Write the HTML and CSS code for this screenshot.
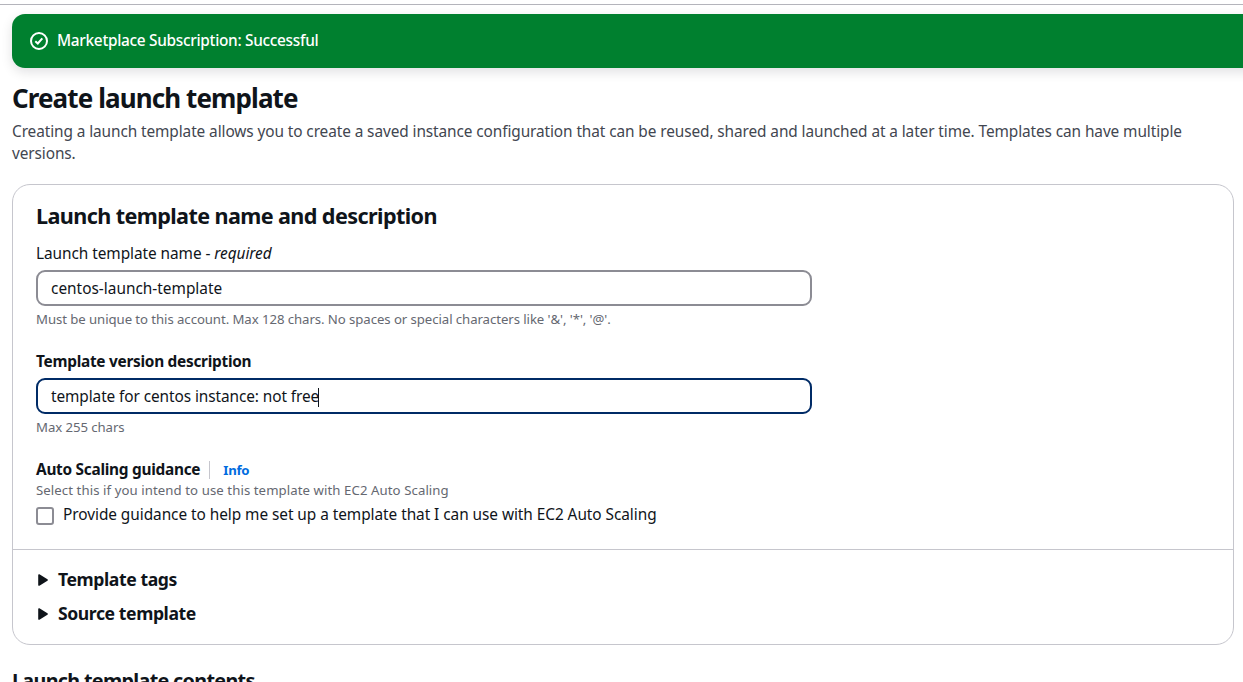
FILE: index.html
```html
<!DOCTYPE html>
<html lang="en">
<head>
<meta charset="utf-8">
<title>Create launch template</title>
<link rel="stylesheet" href="styles.css">
</head>
<body>
<main class="page">
  <div class="flash">
    <svg class="flash-icon" viewBox="0 0 18 18" width="18" height="18" fill="none" stroke="currentColor" stroke-width="2"><circle cx="9" cy="9" r="8"/><path d="M5.3 9.2 7.8 11.5 12.3 6.3"/></svg>
    <span class="flash-text">Marketplace Subscription: Successful</span>
  </div>
  <header class="intro">
    <h1 class="title">Create launch template</h1>
    <p class="lead">Creating a launch template allows you to create a saved instance configuration that can be reused, shared and launched at a later time. Templates can have multiple versions.</p>
  </header>
  <section class="card">
    <div class="card-body">
      <h2 class="card-title">Launch template name and description</h2>
      <div class="field">
        <label class="label">Launch template name - <em>required</em></label>
        <div class="input"><span class="value-name">centos-launch-template</span></div>
        <p class="hint">Must be unique to this account. Max 128 chars. No spaces or special characters like '&amp;', '*', '@'.</p>
      </div>
      <div class="field">
        <label class="label strong">Template version description</label>
        <div class="input focused"><span>template for centos instance: not free</span><i class="caret"></i></div>
        <p class="hint">Max 255 chars</p>
      </div>
      <div class="field guidance">
        <div class="label strong guidance-head"><span>Auto Scaling guidance</span><a class="info">Info</a></div>
        <p class="hint">Select this if you intend to use this template with EC2 Auto Scaling</p>
        <div class="check"><span class="box"></span><span>Provide guidance to help me set up a template that I can use with EC2 Auto Scaling</span></div>
      </div>
    </div>
    <div class="expanders">
      <div class="expander"><svg width="10" height="12" viewBox="0 0 10 12"><path d="M1 1 9 6 1 11Z" fill="currentColor" stroke="currentColor" stroke-width="1.6" stroke-linejoin="round"/></svg><span class="expander-text">Template tags</span></div>
      <div class="expander"><svg width="10" height="12" viewBox="0 0 10 12"><path d="M1 1 9 6 1 11Z" fill="currentColor" stroke="currentColor" stroke-width="1.6" stroke-linejoin="round"/></svg><span class="expander-text">Source template</span></div>
    </div>
  </section>
  <h2 class="contents">Launch template contents</h2>
</main>
</body>
</html>
```
FILE: styles.css
```css
* { box-sizing: border-box; }
html, body { height: 100%; overflow: hidden; }
body { margin: 0; background: #fff; color: #0f141a; font: 15.4px/22px "Noto Sans", sans-serif; white-space: nowrap; }
h1, h2, p { margin: 0; }
.page { margin-top: 4px; border-top: 1px solid #b4b4bb; padding: 9px 9px 0 12px; }
.flash { height: 54px; margin-right: -29px; padding: 0 18px; display: flex; align-items: center; gap: 9px; background: #00802f; color: #fff; border-radius: 13px; box-shadow: 0 4px 12px rgba(0,7,22,.12); }
.flash-text { font-weight: 500; letter-spacing: -.3px; }
.intro { padding-top: 14px; }
.title { font-size: 26px; line-height: 32px; font-weight: 700; letter-spacing: -.9px; }
.lead { margin-top: 7px; white-space: normal; color: #424650; letter-spacing: -.096px; }
.card { height: 461px; margin-top: 19px; border: 1px solid #c6c6cd; border-radius: 18px; }
.card-body { height: 364px; padding: 17px 23px 0; }
.card-title { font-size: 21.6px; line-height: 27px; letter-spacing: -.6px; }
.field { margin-bottom: 22px; }
.card-title + .field { margin-top: 14px; }
.label { display: block; height: 22px; letter-spacing: -.06px; }
.strong { font-weight: 700; letter-spacing: -.27px; }
.input { width: 776px; height: 36px; margin-top: 5px; padding: 2px 13px 0; display: flex; align-items: center; border: 2px solid #8c8c94; border-radius: 9px; letter-spacing: -.09px; }
.value-name { letter-spacing: 0; }
.focused { border-color: #002b66; }
.caret { width: 1px; height: 19px; margin-left: -1px; background: #0f141a; }
.hint { margin-top: 4px; font-size: 13.2px; line-height: 19px; color: #656871; letter-spacing: -.07px; }
.guidance-head { display: flex; align-items: center; }
.info { margin-left: 9px; padding-left: 13px; border-left: 1px solid #c6c6cd; font-size: 13.2px; line-height: 18px; letter-spacing: -.25px; color: #006ce0; }
.guidance .hint { margin-top: 0; letter-spacing: .08px; }
.check { display: flex; align-items: center; gap: 9px; margin-top: 4px; letter-spacing: -.055px; }
.box { width: 18px; height: 18px; margin-top: 1px; border: 2px solid #8c8c94; border-radius: 3px; }
.expanders { border-top: 1px solid #c6c6cd; padding: 13px 25px; }
.expander { height: 34px; display: flex; align-items: center; gap: 10px; font-size: 17.6px; font-weight: 700; letter-spacing: -.42px; }
.expander-text { padding-bottom: 2px; }
.contents { margin-top: 22px; font-size: 19.8px; line-height: 28px; letter-spacing: -.7px; }
```
